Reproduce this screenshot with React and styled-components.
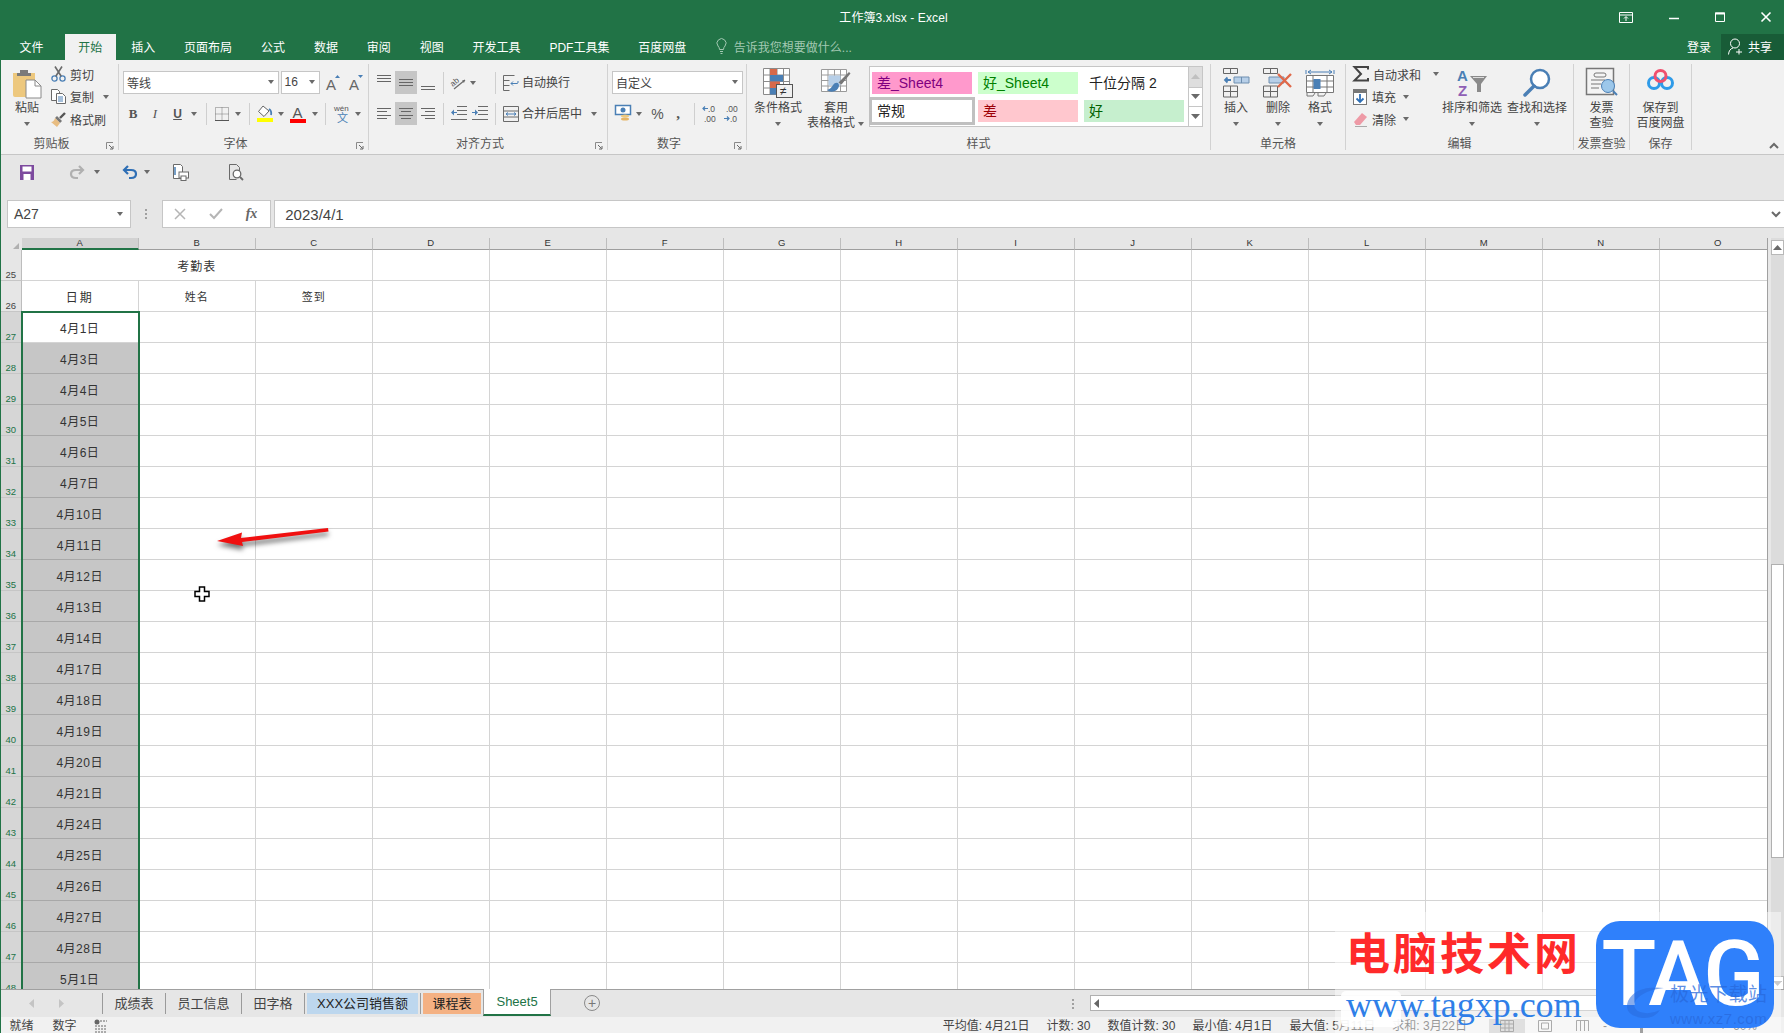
import React from "react";
import styled, { createGlobalStyle } from "styled-components";

const GRAY = "#6a6a6a";
const BLUE = "#4a7fb5";

const Global = createGlobalStyle`
  html, body { margin: 0; padding: 0; background: #fff; overflow: hidden; }
  * { box-sizing: border-box; }
  body { font-family: "Liberation Sans", "Noto Sans CJK SC", sans-serif; font-size: 12px; color: #444; }
  svg { display: block; flex-shrink: 0; overflow: visible; }
`;

const Page = styled.div`
  position: relative;
  width: 1784px;
  height: 1033px;
  display: flex;
  flex-direction: column;
  border-left: 1px solid #217346;
  overflow: hidden;
`;

/* title + tabs */
const TitleBar = styled.div`
  height: 34px;
  flex-shrink: 0;
  display: grid;
  grid-template-columns: 1fr auto 1fr;
  align-items: center;
  background: #217346;
  color: #fff;
`;
const Title = styled.div`
  font-size: 12px;
  padding: 0 0 2px 2px;
  letter-spacing: 0.1px;
`;
const WindowControls = styled.div`
  grid-column: 3;
  display: flex;
  justify-content: flex-end;
  align-items: center;
  gap: 36px;
  padding-right: 13px;
`;
const TabRow = styled.div`
  height: 26px;
  flex-shrink: 0;
  display: flex;
  align-items: stretch;
  gap: 2px;
  background: #217346;
  color: #fff;
`;
const RibbonTab = styled.div`
  display: flex;
  align-items: center;
  padding: 0 13.45px 2px;
  margin-left: ${(p) => p.$ml || 0}px;
  margin-right: ${(p) => p.$mr || 0}px;
  background: ${(p) => (p.$active ? "#f1f1f1" : "transparent")};
  color: ${(p) => (p.$active ? "#217346" : "#fff")};
`;
const TellMe = styled.div`
  display: flex;
  align-items: center;
  gap: 7px;
  margin-left: 14px;
  padding-bottom: 2px;
  color: #a3c9b3;
`;
const Login = styled.div`
  margin-left: auto;
  display: flex;
  align-items: center;
  padding: 0 10px 2px 0;
`;
const Share = styled.div`
  width: 63px;
  display: flex;
  align-items: center;
  gap: 5px;
  padding: 0 0 2px 7px;
  background: #185c37;
  margin-left: -2px;
`;

/* ribbon */
const Ribbon = styled.div`
  position: relative;
  height: 95px;
  flex-shrink: 0;
  display: flex;
  padding-top: 4px;
  background: #f1f1f1;
  border-bottom: 1px solid #c6c6c6;
`;
const Group = styled.div`
  position: relative;
  width: ${(p) => p.$w}px;
  height: 86px;
  flex-shrink: 0;
  display: flex;
  flex-direction: column;
  border-right: 1px solid #d2d2d2;
`;
const GroupBody = styled.div`
  height: 74px;
  flex-shrink: 0;
  display: flex;
  padding-left: ${(p) => p.$pl || 0}px;
  justify-content: ${(p) => (p.$center ? "center" : "flex-start")};
`;
const GroupLabel = styled.div`
  height: 12px;
  line-height: 12px;
  text-align: center;
  white-space: nowrap;
  color: #555;
  padding-right: ${(p) => (p.$launch ? 16 : 0)}px;
`;
const Launcher = styled.span`
  position: absolute;
  right: 4px;
  bottom: 0;
`;
const Collapse = styled.span`
  position: absolute;
  right: 5px;
  bottom: 5px;
`;
const BigBtn = styled.div`
  width: ${(p) => p.$w}px;
  margin-left: ${(p) => p.$ml || 0}px;
  flex-shrink: 0;
  display: flex;
  flex-direction: column;
  align-items: center;
  padding-top: 4px;
  white-space: nowrap;
`;
const BigIcon = styled.div`
  height: 33px;
  display: flex;
  align-items: flex-start;
`;
const BigLine = styled.div`
  height: 15px;
  line-height: 15px;
  display: flex;
  align-items: center;
`;
const SmallCol = styled.div`
  width: ${(p) => p.$w}px;
  margin-left: ${(p) => p.$ml || 0}px;
  margin-top: -1px;
  flex-shrink: 0;
`;
const SmallRow = styled.div`
  height: 22.5px;
  display: flex;
  align-items: center;
  gap: 4px;
  white-space: nowrap;
`;
const ToolRows = styled.div`
  display: flex;
  flex-direction: column;
  gap: 8px;
  padding-top: 7px;
`;
const ToolRow = styled.div`
  height: 23px;
  display: flex;
  align-items: center;
  white-space: nowrap;
`;
const Tool = styled.span`
  width: ${(p) => p.$w}px;
  height: 23px;
  margin-left: ${(p) => p.$ml || 0}px;
  flex-shrink: 0;
  display: inline-flex;
  align-items: center;
  justify-content: center;
  background: ${(p) => (p.$on ? "#c6c6c6" : "transparent")};
  font-family: ${(p) => (p.$serif ? '"Liberation Serif", serif' : "inherit")};
  font-size: ${(p) => p.$fs || 12}px;
  font-weight: ${(p) => (p.$bold ? 700 : 400)};
  font-style: ${(p) => (p.$italic ? "italic" : "normal")};
  text-decoration: ${(p) => (p.$under ? "underline" : "none")};
  color: #555;
`;
const ToolSep = styled.span`
  width: 1px;
  height: 22px;
  margin-left: ${(p) => p.$ml || 0}px;
  flex-shrink: 0;
  background: #cfcfcf;
`;
const ToolText = styled.span`
  margin-left: ${(p) => p.$ml || 0}px;
  padding-bottom: 2px;
`;
const Caret = styled.span`
  width: 8px;
  margin-left: ${(p) => p.$ml || 0}px;
  flex-shrink: 0;
  display: inline-flex;
  justify-content: center;
  &::after {
    content: "";
    border-left: 3.5px solid transparent;
    border-right: 3.5px solid transparent;
    border-top: 4px solid ${GRAY};
  }
`;
const Select = styled.div`
  width: ${(p) => p.$w}px;
  height: 23px;
  margin-left: ${(p) => p.$ml || 0}px;
  flex-shrink: 0;
  display: flex;
  align-items: center;
  justify-content: space-between;
  padding: 0 3px 1px;
  background: #fff;
  border: 1px solid #c6c6c6;
`;
const Gallery = styled.div`
  width: 320px;
  height: 61px;
  margin: 2px 0 0 2.5px;
  flex-shrink: 0;
  display: grid;
  grid-template-columns: repeat(3, 100px);
  grid-auto-rows: 22px;
  gap: 6px;
  padding: 5px 0 0 2.5px;
  background: #fff;
  border: 1px solid #c6c6c6;
`;
const StyleCell = styled.div`
  display: flex;
  align-items: center;
  padding: 0 0 2px 5px;
  font-size: 14px;
  background: ${(p) => p.$bg};
  color: ${(p) => p.$fg};
  box-shadow: ${(p) => (p.$picked ? "0 0 0 3px #c0c0c0" : "none")};
`;
const GalleryScroll = styled.div`
  width: 14px;
  height: 61px;
  margin-top: 2px;
  flex-shrink: 0;
  display: flex;
  flex-direction: column;
  border: 1px solid #c6c6c6;
  border-left: 0;
`;
const GalleryBtn = styled.div`
  flex: ${(p) => p.$flex};
  display: flex;
  align-items: center;
  justify-content: center;
  background: ${(p) => (p.$off ? "#dedede" : "#fff")};
  border-bottom: ${(p) => (p.$last ? 0 : "1px solid #c6c6c6")};
`;

/* quick access */
const Quick = styled.div`
  height: 44px;
  flex-shrink: 0;
  display: flex;
  align-items: center;
  padding-bottom: 10px;
  background: #e6e6e6;
`;
const QuickItem = styled.span`
  margin-left: ${(p) => p.$ml}px;
`;

/* formula bar */
const FormulaBar = styled.div`
  height: 39px;
  flex-shrink: 0;
  display: flex;
  align-items: flex-start;
  padding-top: 1px;
  background: #e6e6e6;
`;
const NameBox = styled.div`
  width: 124px;
  height: 28px;
  margin-left: 6px;
  display: flex;
  align-items: center;
  justify-content: space-between;
  padding: 0 6px;
  font-size: 14px;
  background: #fff;
  border: 1px solid #c6c6c6;
`;
const Dots = styled.span`
  width: 2px;
  height: 10px;
  margin: 9px 0 0 14px;
  background: repeating-linear-gradient(#a0a0a0 0 2px, transparent 2px 4px);
`;
const FuncBox = styled.div`
  width: 109px;
  height: 28px;
  margin-left: 14.7px;
  display: flex;
  align-items: center;
  gap: 23px;
  padding-left: 11px;
  background: #fff;
  border: 1px solid #c6c6c6;
`;
const FxLabel = styled.span`
  font: italic 700 14px "Liberation Serif", serif;
  color: #666;
`;
const FormulaInput = styled.div`
  flex: 1;
  height: 28px;
  margin-left: 3.6px;
  display: flex;
  align-items: center;
  justify-content: space-between;
  padding: 0 3px 0 10px;
  font-size: 15px;
  background: #fff;
  border: 1px solid #c6c6c6;
  border-right: 0;
`;

/* sheet */
const SheetArea = styled.div`
  flex: 1;
  min-height: 0;
  display: flex;
`;
const Sheet = styled.div`
  position: relative;
  flex: 1;
  min-width: 0;
  overflow: hidden;
  background: #fff;
`;
const HeadRow = styled.div`
  height: 12px;
  display: flex;
  background: #e6e6e6;
`;
const Corner = styled.div`
  width: 20.67px;
  flex-shrink: 0;
  display: flex;
  align-items: flex-end;
  justify-content: flex-end;
  padding: 0 3px 1px 0;
`;
const ColHead = styled.div`
  width: 117px;
  flex-shrink: 0;
  line-height: 10px;
  text-align: center;
  font-size: 9.5px;
  color: #333;
  background: ${(p) => (p.$active ? "#d2d2d2" : "transparent")};
  border-right: 1px solid #bdbdbd;
  border-bottom: ${(p) => (p.$active ? "2px solid #217346" : "1px solid #9e9e9e")};
`;
const Row = styled.div`
  height: 31px;
  display: flex;
`;
const RowHead = styled.div`
  width: 20.67px;
  flex-shrink: 0;
  display: flex;
  align-items: flex-end;
  justify-content: center;
  line-height: 11px;
  font-size: 9.5px;
  background: ${(p) => (p.$active ? "#d6d6d6" : "#e6e6e6")};
  color: ${(p) => (p.$active ? "#217346" : "#444")};
  border-bottom: 1px solid #c6c6c6;
  border-right: 1px solid #bdbdbd;
`;
const Cell = styled.div`
  width: ${(p) => p.$w || 117}px;
  flex-shrink: 0;
  display: flex;
  align-items: center;
  justify-content: center;
  color: #333;
  font-size: ${(p) => p.$fs || 12}px;
  letter-spacing: ${(p) => p.$ls || 0}px;
  background: ${(p) => (p.$sel ? "#c6c6c6" : "#fff")};
  border-right: 1px solid ${(p) => (p.$sel ? "#a8a8a8" : "#d4d4d4")};
  border-bottom: 1px solid ${(p) => (p.$sel ? "#a8a8a8" : "#d4d4d4")};
`;
const Selection = styled.div`
  position: absolute;
  left: 19.7px;
  top: 73px;
  bottom: -4px;
  width: 119.6px;
  border: 2px solid #217346;
  pointer-events: none;
`;
const VScroll = styled.div`
  width: 17px;
  flex-shrink: 0;
  display: flex;
  flex-direction: column;
  padding-left: 3px;
  background: #e8e8e8;
  border-left: 1px solid #a0a0a0;
`;
const VTrack = styled.div`
  flex: 1;
  display: flex;
  flex-direction: column;
  background: #dcdcdc;
`;
const VBtn = styled.div`
  height: 15px;
  display: flex;
  align-items: center;
  justify-content: center;
  background: #fff;
  border: 1px solid #b8b8b8;
  margin-top: ${(p) => p.$mt || 0}px;
`;
const VSpace = styled.div`
  height: ${(p) => p.$h}px;
`;
const VThumb = styled.div`
  height: 294px;
  background: #fff;
  border: 1px solid #b0b0b0;
`;

/* sheet tabs */
const TabBar = styled.div`
  height: 28px;
  flex-shrink: 0;
  display: flex;
  background: #e6e6e6;
  border-top: 1px solid #a0a0a0;
`;
const TabNav = styled.div`
  width: 101px;
  flex-shrink: 0;
  display: flex;
  align-items: center;
  gap: 25px;
  padding-left: 28px;
`;
const SheetTab = styled.div`
  display: flex;
  align-items: center;
  padding: 0 ${(p) => p.$pad}px 2px;
  margin: 3px 0 3px ${(p) => p.$ml || 0}px;
  font-size: 13px;
  white-space: nowrap;
  border-left: ${(p) => (p.$sep ? "1px solid #9a9a9a" : "0")};
  color: #444;
`;
const ColorTab = styled(SheetTab)`
  background: ${(p) => p.$bg};
  color: #222;
`;
const ActiveTab = styled.div`
  width: 68px;
  margin: -1px 0 1px 2px;
  display: flex;
  align-items: center;
  justify-content: center;
  background: #fff;
  color: #217346;
  font-size: 13px;
  border-left: 1px solid #a0a0a0;
  border-right: 1px solid #a0a0a0;
  border-bottom: 2px solid #217346;
`;
const AddSheet = styled.span`
  width: 16px;
  height: 16px;
  margin: 5px 0 0 33px;
  flex-shrink: 0;
  display: flex;
  align-items: center;
  justify-content: center;
  border: 1px solid #8a8a8a;
  border-radius: 50%;
  font-size: 14px;
  line-height: 1;
  color: #777;
`;
const HBarDots = styled(Dots)`
  margin: 9px 0 0 472px;
`;
const HBar = styled.div`
  width: 676px;
  height: 16px;
  margin: 5px 0 0 16px;
  display: flex;
  align-items: center;
  padding-left: 3px;
  background: #fff;
  border: 1px solid #b0b0b0;
`;

/* status */
const Status = styled.div`
  height: 16px;
  flex-shrink: 0;
  display: flex;
  align-items: center;
  background: #f1f1f1;
  white-space: nowrap;
  line-height: 14px;
  padding-top: 2px;
`;
const StatusItem = styled.span`
  margin-left: ${(p) => p.$ml}px;
`;
const Stats = styled.div`
  margin-left: auto;
  display: flex;
  gap: 17px;
`;
const StatusRight = styled.div`
  width: 295px;
  margin-left: 22px;
  flex-shrink: 0;
  display: flex;
  align-items: center;
`;
const ViewBtn = styled.span`
  width: ${(p) => p.$w}px;
  height: 14px;
  flex-shrink: 0;
  display: flex;
  align-items: center;
  justify-content: center;
  background: ${(p) => (p.$on ? "#c6c6c6" : "transparent")};
`;
const ZoomTrack = styled.span`
  position: relative;
  width: 96px;
  height: 1px;
  margin: 0 6px;
  flex-shrink: 0;
  background: #9a9a9a;
`;
const ZoomThumb = styled.span`
  position: absolute;
  left: 24px;
  top: -7px;
  width: 3px;
  height: 14px;
  background: #555;
`;

/* things lying over the sheet */
const Arrow = styled.svg`
  position: absolute;
  left: 211px;
  top: 522px;
  filter: drop-shadow(0 4px 2.5px rgba(0, 0, 0, 0.55));
`;
const CrossCursor = styled.svg`
  position: absolute;
  left: 193px;
  top: 586px;
`;
const Watermark = styled.div`
  position: absolute;
  left: 1334px;
  top: 912px;
  width: 446px;
  height: 121px;
  display: flex;
  background: rgba(255, 255, 255, 0.45);
`;
const WmText = styled.div`
  position: relative;
  width: 261px;
  flex-shrink: 0;
  padding: 17px 0 0 11px;
`;
const WmRed = styled.div`
  font: 700 44px/44px "Noto Sans CJK SC", sans-serif;
  letter-spacing: 3px;
  color: #ff2a2a;
  white-space: nowrap;
`;
const WmUrl = styled.div`
  position: relative;
  margin: 14px 0 0 0;
  font: 36px/36px "Liberation Serif", serif;
  color: #2f7fe8;
  white-space: nowrap;
`;
const WmBlur = styled.div`
  position: absolute;
  left: 6px;
  top: 79px;
  width: 60px;
  height: 36px;
  border-radius: 5px;
  background: rgba(255, 255, 255, 0.9);
`;
const WmTile = styled.div`
  position: relative;
  width: 178px;
  height: 107px;
  margin-top: 9px;
  flex-shrink: 0;
  display: flex;
  align-items: center;
  justify-content: center;
  padding-right: 8px;
  border-radius: 24px;
  background: #2f80fb;
  color: #fff;
  font: 500 90px/90px Roboto, sans-serif;
  letter-spacing: -4px;
  overflow: hidden;
`;
const WmFaint = styled.div`
  position: absolute;
  left: 74px;
  top: ${(p) => p.$top}px;
  font-family: "Liberation Sans", "Noto Sans CJK SC", sans-serif;
  font-size: ${(p) => p.$fs}px;
  line-height: 1;
  font-weight: 400;
  letter-spacing: 0.5px;
  color: rgba(40, 105, 220, 0.75);
  white-space: nowrap;
`;
const WmSwirl = styled.svg`
  position: absolute;
  left: 28px;
  top: 64px;
`;

/* icons */
const Paste = () => (
  <svg width="28" height="30" viewBox="0 0 28 30">
    <path d="M0 5h22v24H2q-2 0-2-2z" fill="#edc87e" />
    <path d="M4 5h3V2h8v3h3v3H4z" fill="#7a7a7a" />
    <path d="M13 12h9l6 6v12H13z" fill="#fff" stroke="#8a8a8a" />
    <path d="M22 12v6h6" fill="none" stroke="#8a8a8a" />
  </svg>
);
const Scissors = () => (
  <svg width="15" height="16" viewBox="0 0 15 16">
    <circle cx="3.5" cy="12.5" r="2.6" fill="none" stroke={BLUE} strokeWidth="1.3" />
    <circle cx="11.5" cy="12.5" r="2.6" fill="none" stroke={BLUE} strokeWidth="1.3" />
    <path d="M4.8 10.2 11 .5M10.2 10.2 4 .5" stroke={GRAY} strokeWidth="1.6" />
  </svg>
);
const Copy = () => (
  <svg width="15" height="15" viewBox="0 0 15 15">
    <path d="M.5.5h6l2 2v9H.5z" fill="#fff" stroke={GRAY} />
    <path d="M5.5 4.5h6l3 3v7h-9z" fill="#fff" stroke={GRAY} />
    <path d="M7 8h5M7 10h5M7 12h5" stroke={BLUE} />
  </svg>
);
const Brush = () => (
  <svg width="15" height="15" viewBox="0 0 15 15">
    <path d="M9 6 14 1" stroke="#555" strokeWidth="2.4" />
    <path d="m6 4 5 5-2 2-5-5z" fill="#777" />
    <path d="M4 6l5 5-3 4-6-5q3 0 4-4z" fill="#e8bd82" />
  </svg>
);
const Launch = () => (
  <svg width="8" height="8" viewBox="0 0 8 8">
    <path d="M.5 7V.5H7" fill="none" stroke="#8a8a8a" />
    <path d="m3 3 3.5 3.5M7 4v3H4" fill="none" stroke="#666" />
  </svg>
);
const GrowA = ({ up }) => (
  <svg width="14" height="17" viewBox="0 0 14 17">
    <text x="0" y="16" fontSize="15" fontFamily="Liberation Sans" fill="#666">A</text>
    <path d={up ? "M9 4l2.5-3L14 4z" : "M9 1h5l-2.5 3z"} fill={BLUE} />
  </svg>
);
const BorderIcon = () => (
  <svg width="14" height="14" viewBox="0 0 14 14">
    <path d="M.5.5h13v13H.5zM.5 7h13M7 .5v13" fill="none" stroke="#777" strokeDasharray="1 1" />
    <path d="M0 13.5h14" stroke="#555" />
  </svg>
);
const FillIcon = () => (
  <svg width="16" height="17" viewBox="0 0 16 17">
    <path d="M6 1 1.5 6.5 7 11.5l5-5.5z" fill="#fff" stroke="#666" />
    <path d="M12 4q3 2 2 6" fill="none" stroke={BLUE} strokeWidth="1.8" />
    <rect y="13" width="16" height="4" fill="#ffff00" />
  </svg>
);
const FontColor = () => (
  <svg width="16" height="18" viewBox="0 0 16 18">
    <text x="2.5" y="13" fontSize="15" fontFamily="Liberation Sans" fill="#555">A</text>
    <rect y="14" width="16" height="4" fill="#ff0000" />
  </svg>
);
const Wen = () => (
  <svg width="16" height="20" viewBox="0 0 16 20">
    <text x="0" y="7" fontSize="8" fontFamily="Liberation Sans" fill="#555">wén</text>
    <text x="3" y="18" fontSize="11" fontFamily="Noto Sans CJK SC" fill={BLUE}>文</text>
  </svg>
);
const Lines = ({ w = 14, rows }) => (
  <svg width={w} height="23" viewBox={`0 0 ${w} 23`}>
    {rows.map(([a, b, y]) => (
      <path key={y} d={`M${a} ${y}.5H${b}`} stroke="#666" />
    ))}
  </svg>
);
const Orient = () => (
  <svg width="16" height="16" viewBox="0 0 16 16">
    <text x="0" y="9" fontSize="8" fontFamily="Liberation Sans" fill="#555" transform="rotate(-40 5 8)">ab</text>
    <path d="M3 14 14 5" stroke={GRAY} strokeWidth="1.2" />
    <path d="m14 5-3 .5 2 2.5z" fill={GRAY} />
  </svg>
);
const Wrap = () => (
  <svg width="16" height="16" viewBox="0 0 16 16">
    <path d="M.5.5h11M.5 5.5h6M.5 10.500h6M.5 15.500h6M.5.5v15" fill="none" stroke={GRAY} />
    <path d="M8 8.500h6q1.500 0 1-2.500M8 8.500l2-2M8 8.500l2 2" fill="none" stroke={BLUE} />
  </svg>
);
const Merge = () => (
  <svg width="16" height="16" viewBox="0 0 16 16">
    <path d="M.5.500h15v15H.5zM.5 5h15M.5 11h15" fill="none" stroke={GRAY} />
    <path d="M3 8h10M3 8l2-1.500M3 8l2 1.500M13 8l-2-1.500M13 8l-2 1.500" fill="none" stroke={BLUE} />
  </svg>
);
const Indent = ({ flip }) => (
  <svg width="16" height="15" viewBox="0 0 16 15">
    <path d="M6 .5h10M6 4.500h10M6 8.500h10M0 13.500h16" fill="none" stroke={GRAY} />
    <path d={flip ? "M0 6h3V3.500l3 3-3 3V7H0z" : "M6 6H3V3.500l-3 3 3 3V7h3z"} fill={BLUE} />
  </svg>
);
const Currency = () => (
  <svg width="16" height="17" viewBox="0 0 16 17">
    <rect x=".5" y=".5" width="15" height="9" fill="#fff" stroke={BLUE} strokeWidth="1.500" />
    <circle cx="8" cy="5" r="2.500" fill={BLUE} />
    <ellipse cx="10" cy="11" rx="4" ry="1.500" fill="#edc87e" />
    <ellipse cx="10" cy="14" rx="4" ry="1.500" fill="#e6b566" />
  </svg>
);
const Decimal = ({ more }) => (
  <svg width="15" height="18" viewBox="0 0 15 18">
    <text x={more ? 2 : 6} y="7" fontSize="8.500" fontFamily="Liberation Sans" fill="#555">{more ? ".00" : ".0"}</text>
    <text x={more ? 6 : 2} y="17" fontSize="8.500" fontFamily="Liberation Sans" fill="#555">{more ? ".0" : ".00"}</text>
    <path d={more ? "M0 13.500h5M3 11.500l2 2-2 2" : "M6 3.500H1M3 1.500l-2 2 2 2"} fill="none" stroke={BLUE} strokeWidth="1.200" />
  </svg>
);
const CondFormat = () => (
  <svg width="30" height="30" viewBox="0 0 30 30">
    <path d="M.5.500h26v26H.5zM.5 7h26M.5 13.500h26M.5 20h26M7 .5v26M14 .5v26M20.500.5v26" fill="#fff" stroke="#8a8a8a" />
    <rect x="7" y="1" width="7" height="6" fill="#d8694a" />
    <rect x="7" y="7" width="13" height="6.500" fill={BLUE} />
    <rect x="7" y="13.500" width="10" height="6.500" fill="#d8694a" />
    <rect x="7" y="20" width="6" height="6.500" fill={BLUE} />
    <rect x="13.500" y="16.500" width="16" height="13" fill="#f1f1f1" stroke="#555" />
    <text x="17" y="27" fontSize="12" fontFamily="Liberation Sans" fill="#333">≠</text>
  </svg>
);
const TableFormat = () => (
  <svg width="30" height="30" viewBox="0 0 30 30">
    <path d="M.5 1.500h25v22H.5zM.5 7h25M.5 12.500h25M.5 18h25M7 1.500v22M13.500 1.500v22M19.500 1.500v22" fill="#fff" stroke="#9a9a9a" />
    <rect x="7.500" y="7.500" width="12" height="10" fill="#b7cfe8" />
    <path d="m28 4 1.500 1.500-9 11-3-2z" fill="#777" />
    <path d="M17 15q-3-1-5 2-2 4-6 5 3 3 8 1 4-2 4-6z" fill={BLUE} />
  </svg>
);
const InsertCells = () => (
  <svg width="26" height="30" viewBox="0 0 26 30">
    <path d="M.5.500h14v5H.5zM7.500.5v5M.5 18h14v11H.5zM.5 23.500h14M7.500 18v11" fill="none" stroke="#666" />
    <path d="M11 9h15v6H11zM18.500 9v6" fill="#b7cfe8" stroke="#6e8fb0" />
    <path d="M8 12H2M4.500 9.500 2 12l2.500 2.500" fill="none" stroke={BLUE} strokeWidth="1.800" />
  </svg>
);
const DeleteCells = () => (
  <svg width="30" height="30" viewBox="0 0 30 30">
    <path d="M.5.500h14v5H.5zM7.500.5v5M.5 18h14v11H.5zM.5 23.500h14M7.500 18v11" fill="none" stroke="#666" />
    <path d="M6 9h15v6H6z" fill="#b7cfe8" stroke="#6e8fb0" />
    <path d="m15 6 13 13M28 6 15 19" stroke="#e0694a" strokeWidth="2.400" />
  </svg>
);
const FormatCells = () => (
  <svg width="28" height="30" viewBox="0 0 28 30">
    <path d="M0 2v4M28 2v4M2 4h24M2 4l3-2M2 4l3 2M26 4l-3-2M26 4l-3 2" fill="none" stroke={BLUE} />
    <path d="M.5 7.500h27v17H.5zM.5 13h27M.5 19h27M7 7.500v17M21 7.500v17" fill="#fff" stroke="#777" />
    <rect x="7.500" y="11" width="7" height="10" fill={BLUE} />
    <path d="M1 25v3h6l2-3M12 25v3h6l2-3" fill="none" stroke="#777" />
  </svg>
);
const Sigma = () => (
  <svg width="16" height="16" viewBox="0 0 16 16">
    <path d="M15 3.500V1H1.500l6.500 7-6.500 6.500H15V12" fill="none" stroke="#444" strokeWidth="2" />
  </svg>
);
const FillDown = () => (
  <svg width="15" height="16" viewBox="0 0 15 16">
    <rect x=".5" y=".5" width="13" height="15" fill="#fff" stroke="#777" />
    <rect x="1" y="1" width="12" height="3" fill="#777" />
    <path d="M7 5v8M3.500 9.500 7 13l3.500-3.500" fill="none" stroke="#2f6fb5" strokeWidth="1.800" />
  </svg>
);
const Eraser = () => (
  <svg width="15" height="15" viewBox="0 0 15 15">
    <path d="m9 1 5 4-7 8H3L1 10z" fill="#ee9aa6" />
    <path d="M2 14.500h12" stroke="#aaa" />
  </svg>
);
const SortFilter = () => (
  <svg width="30" height="30" viewBox="0 0 30 30">
    <text x="0" y="13" fontSize="15" fontWeight="700" fontFamily="Liberation Sans" fill={BLUE}>A</text>
    <text x="1" y="28" fontSize="15" fontWeight="700" fontFamily="Liberation Sans" fill="#8f5fb5">Z</text>
    <path d="M13 8h17l-6 8v8h-4v-8z" fill="#8a8a8a" />
    <path d="M16 9.500h11" stroke="#ddd" />
  </svg>
);
const FindIcon = () => (
  <svg width="28" height="30" viewBox="0 0 28 30">
    <circle cx="17" cy="11" r="9" fill="#fff" stroke={BLUE} strokeWidth="2.500" />
    <path d="M11 18 2 27" stroke={BLUE} strokeWidth="3.500" strokeLinecap="round" />
  </svg>
);
const InvoiceIcon = () => (
  <svg width="32" height="30" viewBox="0 0 32 30">
    <rect x=".5" y=".5" width="27" height="26" fill="#f4f4f4" stroke="#777" strokeWidth="1.500" />
    <rect x="8" y="5" width="12" height="4" rx="2" fill="none" stroke="#777" />
    <path d="M5 12h14M5 16h10M5 20h8" stroke="#777" />
    <circle cx="22" cy="18" r="6.500" fill="#9cc7ea" stroke={BLUE} />
    <path d="m27 23 4 4" stroke={BLUE} strokeWidth="2" />
  </svg>
);
const BaiduCloud = () => (
  <svg width="27" height="24" viewBox="0 0 27 24">
    <circle cx="7" cy="15" r="5.500" fill="none" stroke="#2f9be8" strokeWidth="3" />
    <circle cx="20" cy="15" r="5.500" fill="none" stroke="#2f9be8" strokeWidth="3" />
    <circle cx="13.500" cy="8" r="5.500" fill="none" stroke="#f0506e" strokeWidth="3" />
  </svg>
);
const FloppySave = () => (
  <svg width="14" height="15" viewBox="0 0 14 15">
    <path d="M0 0h14v15H0z" fill="#7d4a9e" />
    <rect x="2.500" y="1.500" width="9" height="5" fill="#fff" />
    <rect x="3.500" y="9" width="7" height="6" fill="#fff" />
  </svg>
);
const Turn = ({ back }) => (
  <svg width="15" height="14" viewBox="0 0 15 14">
    <g transform={back ? "" : "matrix(-1 0 0 1 15 0)"} fill="none" stroke={back ? "#2f6fb5" : "#b0b0b0"} strokeWidth="2.200">
      <path d="M2 5h7q5 0 5 4t-5 4H7" />
      <path d="M6 1 2 5l4 4" />
    </g>
  </svg>
);
const PrintPreview = () => (
  <svg width="16" height="17" viewBox="0 0 16 17">
    <path d="M.5.500h7l2 2v12H.5z" fill="#fff" stroke={GRAY} />
    <path d="M2 3v8" stroke={BLUE} strokeWidth="1.500" />
    <rect x="6" y="8" width="9.500" height="6" fill="#fff" stroke={GRAY} />
    <rect x="8" y="12" width="5" height="4.500" fill="#fff" stroke={GRAY} />
  </svg>
);
const DocSearch = () => (
  <svg width="15" height="17" viewBox="0 0 15 17">
    <path d="M.5.500h7l3 3V7M.5.500v15h7" fill="none" stroke={GRAY} />
    <circle cx="8" cy="10" r="3.800" fill="#fff" stroke={GRAY} strokeWidth="1.300" />
    <path d="m11 13 3 3" stroke={GRAY} strokeWidth="1.800" />
  </svg>
);
const Bulb = () => (
  <svg width="11" height="15" viewBox="0 0 11 15">
    <path d="M3.500 10.500Q3.500 8.500 2 7a4.500 4.500 0 1 1 7 0q-1.500 1.500-1.500 3.500zM4 12.500h3M4.500 14.500h2" fill="none" stroke="#a3c9b3" />
  </svg>
);
const PersonPlus = () => (
  <svg width="15" height="17" viewBox="0 0 15 17">
    <circle cx="7" cy="5.500" r="4.500" fill="none" stroke="#fff" />
    <path d="M.5 16.500Q1 11 5 10M11 11v5.500M8 14h6" fill="none" stroke="#fff" />
  </svg>
);
const ArrowUp = ({ c = GRAY }) => (
  <svg width="9" height="5" viewBox="0 0 9 5">
    <path d="M0 5 4.500 0 9 5z" fill={c} />
  </svg>
);
const ArrowDown = ({ c = GRAY }) => (
  <svg width="9" height="5" viewBox="0 0 9 5">
    <path d="M0 0h9L4.500 5z" fill={c} />
  </svg>
);
const Chevron = ({ up }) => (
  <svg width="10" height="7" viewBox="0 0 10 7">
    <path d={up ? "M1 6l4-4 4 4" : "M1 1l4 4 4-4"} fill="none" stroke={GRAY} strokeWidth="2" />
  </svg>
);

const MONTH_DAYS = [
  "4月1日", "4月3日", "4月4日", "4月5日", "4月6日", "4月7日", "4月10日", "4月11日",
  "4月12日", "4月13日", "4月14日", "4月17日", "4月18日", "4月19日", "4月20日", "4月21日",
  "4月24日", "4月25日", "4月26日", "4月27日", "4月28日", "5月1日",
];
const COLS = "ABCDEFGHIJKLMNO".split("");
const LEFT_ROWS = [[0, 14, 6], [0, 10, 9], [0, 14, 13], [0, 10, 16]];
const CENTER_ROWS = [[4, 18, 6], [6, 16, 9], [4, 18, 13], [6, 16, 16]];
const RIGHT_ROWS = [[0, 14, 6], [4, 14, 9], [0, 14, 13], [4, 14, 16]];
const TAIL_COLS = COLS.slice(3);

const Big = ({ w, ml, icon, lines, caret, inlineCaret }) => (
  <BigBtn $w={w} $ml={ml}>
    <BigIcon>{icon}</BigIcon>
    {lines.map((t, i) => (
      <BigLine key={t}>
        {t}
        {inlineCaret && i === lines.length - 1 && <Caret $ml={2} />}
      </BigLine>
    ))}
    {caret && (
      <BigLine>
        <Caret />
      </BigLine>
    )}
  </BigBtn>
);

function ClipboardGroup() {
  return (
    <Group $w={118}>
      <GroupBody $pl={10}>
        <Big w={32} icon={<Paste />} lines={["粘贴"]} caret />
        <SmallCol $w={60} $ml={8}>
          <SmallRow><Scissors />剪切</SmallRow>
          <SmallRow><Copy />复制<Caret $ml={4} /></SmallRow>
          <SmallRow><Brush />格式刷</SmallRow>
        </SmallCol>
      </GroupBody>
      <GroupLabel $launch>剪贴板</GroupLabel>
      <Launcher><Launch /></Launcher>
    </Group>
  );
}

function FontGroup() {
  return (
    <Group $w={250}>
      <GroupBody $pl={4}>
        <ToolRows>
          <ToolRow>
            <Select $w={156}>等线<Caret /></Select>
            <Select $w={39} $ml={1.5}>16<Caret /></Select>
            <Tool $w={14} $ml={6}><GrowA up /></Tool>
            <Tool $w={14} $ml={9}><GrowA /></Tool>
          </ToolRow>
          <ToolRow>
            <Tool $w={14} $ml={3} $serif $bold $fs={13}>B</Tool>
            <Tool $w={14} $ml={8} $serif $italic $fs={13}>I</Tool>
            <Tool $w={14} $ml={8.5} $under $bold $fs={12}>U</Tool>
            <Caret $ml={5.5} />
            <ToolSep $ml={7.5} />
            <Tool $w={14} $ml={8}><BorderIcon /></Tool>
            <Caret $ml={5} />
            <ToolSep $ml={7} />
            <Tool $w={16} $ml={7}><FillIcon /></Tool>
            <Caret $ml={4} />
            <Tool $w={16} $ml={5}><FontColor /></Tool>
            <Caret $ml={5} />
            <ToolSep $ml={6} />
            <Tool $w={16} $ml={8}><Wen /></Tool>
            <Caret $ml={4} />
          </ToolRow>
        </ToolRows>
      </GroupBody>
      <GroupLabel $launch>字体</GroupLabel>
      <Launcher><Launch /></Launcher>
    </Group>
  );
}

function AlignGroup() {
  return (
    <Group $w={239}>
      <GroupBody $pl={8}>
        <ToolRows>
          <ToolRow>
            <Tool $w={14}><Lines rows={[[0, 14, 4], [0, 14, 7], [0, 14, 10]]} /></Tool>
            <Tool $w={22} $ml={4} $on><Lines w={22} rows={[[4, 18, 8], [4, 18, 11], [4, 18, 14]]} /></Tool>
            <Tool $w={14} $ml={4}><Lines rows={[[0, 14, 15], [0, 14, 18]]} /></Tool>
            <ToolSep $ml={8} />
            <Tool $w={16} $ml={7}><Orient /></Tool>
            <Caret $ml={2} />
            <ToolSep $ml={18} />
            <Tool $w={16} $ml={7}><Wrap /></Tool>
            <ToolText $ml={3}>自动换行</ToolText>
          </ToolRow>
          <ToolRow>
            <Tool $w={14}><Lines rows={LEFT_ROWS} /></Tool>
            <Tool $w={22} $ml={4} $on><Lines w={22} rows={CENTER_ROWS} /></Tool>
            <Tool $w={14} $ml={4}><Lines rows={RIGHT_ROWS} /></Tool>
            <ToolSep $ml={8} />
            <Tool $w={16} $ml={7}><Indent /></Tool>
            <Tool $w={16} $ml={5}><Indent flip /></Tool>
            <ToolSep $ml={7} />
            <Tool $w={16} $ml={7}><Merge /></Tool>
            <ToolText $ml={3}>合并后居中</ToolText>
            <Caret $ml={8} />
          </ToolRow>
        </ToolRows>
      </GroupBody>
      <GroupLabel $launch>对齐方式</GroupLabel>
      <Launcher><Launch /></Launcher>
    </Group>
  );
}

function NumberGroup() {
  return (
    <Group $w={139}>
      <GroupBody $pl={4}>
        <ToolRows>
          <ToolRow>
            <Select $w={131}>自定义<Caret /></Select>
          </ToolRow>
          <ToolRow>
            <Tool $w={16} $ml={3}><Currency /></Tool>
            <Caret $ml={4} />
            <Tool $w={13} $ml={8} $fs={14}>%</Tool>
            <Tool $w={8} $ml={10} $serif $bold $fs={15}>,</Tool>
            <ToolSep $ml={12} />
            <Tool $w={15} $ml={7}><Decimal /></Tool>
            <Tool $w={15} $ml={7}><Decimal more /></Tool>
          </ToolRow>
        </ToolRows>
      </GroupBody>
      <GroupLabel $launch>数字</GroupLabel>
      <Launcher><Launch /></Launcher>
    </Group>
  );
}

function StylesGroup() {
  return (
    <Group $w={464}>
      <GroupBody>
        <Big w={50} ml={6} icon={<CondFormat />} lines={["条件格式"]} caret />
        <Big w={60} ml={3} icon={<TableFormat />} lines={["套用", "表格格式"]} inlineCaret />
        <Gallery>
          <StyleCell $bg="#ff99cc" $fg="#800080">差_Sheet4</StyleCell>
          <StyleCell $bg="#ccffcc" $fg="#008000">好_Sheet4</StyleCell>
          <StyleCell $bg="#fff" $fg="#222">千位分隔 2</StyleCell>
          <StyleCell $bg="#fff" $fg="#222" $picked>常规</StyleCell>
          <StyleCell $bg="#ffc7ce" $fg="#9c0006">差</StyleCell>
          <StyleCell $bg="#c6efce" $fg="#006100">好</StyleCell>
        </Gallery>
        <GalleryScroll>
          <GalleryBtn $flex={21} $off><ArrowUp c="#c0c0c0" /></GalleryBtn>
          <GalleryBtn $flex={19}><ArrowDown /></GalleryBtn>
          <GalleryBtn $flex={20} $last><ArrowDown /></GalleryBtn>
        </GalleryScroll>
      </GroupBody>
      <GroupLabel>样式</GroupLabel>
    </Group>
  );
}

function CellsGroup() {
  return (
    <Group $w={135}>
      <GroupBody $pl={4}>
        <Big w={42} icon={<InsertCells />} lines={["插入"]} caret />
        <Big w={42} icon={<DeleteCells />} lines={["删除"]} caret />
        <Big w={42} icon={<FormatCells />} lines={["格式"]} caret />
      </GroupBody>
      <GroupLabel>单元格</GroupLabel>
    </Group>
  );
}

function EditGroup() {
  return (
    <Group $w={228}>
      <GroupBody $pl={7}>
        <SmallCol $w={89}>
          <SmallRow><Sigma />自动求和<Caret $ml={7} /></SmallRow>
          <SmallRow><FillDown />填充<Caret $ml={2} /></SmallRow>
          <SmallRow><Eraser />清除<Caret $ml={2} /></SmallRow>
        </SmallCol>
        <Big w={60} icon={<SortFilter />} lines={["排序和筛选"]} caret />
        <Big w={60} ml={5} icon={<FindIcon />} lines={["查找和选择"]} caret />
      </GroupBody>
      <GroupLabel>编辑</GroupLabel>
    </Group>
  );
}

function RibbonBar() {
  return (
    <Ribbon>
      <ClipboardGroup />
      <FontGroup />
      <AlignGroup />
      <NumberGroup />
      <StylesGroup />
      <CellsGroup />
      <EditGroup />
      <Group $w={56}>
        <GroupBody $center>
          <Big w={50} icon={<InvoiceIcon />} lines={["发票", "查验"]} />
        </GroupBody>
        <GroupLabel>发票查验</GroupLabel>
      </Group>
      <Group $w={62}>
        <GroupBody $center>
          <Big w={50} icon={<BaiduCloud />} lines={["保存到", "百度网盘"]} />
        </GroupBody>
        <GroupLabel>保存</GroupLabel>
      </Group>
      <Collapse><Chevron up /></Collapse>
    </Ribbon>
  );
}

function SheetGrid() {
  return (
    <Sheet>
      <HeadRow>
        <Corner>
          <svg width="6" height="6" viewBox="0 0 6 6"><path d="M6 0v6H0z" fill="#b0b0b0" /></svg>
        </Corner>
        {COLS.map((c) => (
          <ColHead key={c} $active={c === "A"}>{c}</ColHead>
        ))}
      </HeadRow>
      <Row>
        <RowHead>25</RowHead>
        <Cell $w={351} $ls={1}>考勤表</Cell>
        {TAIL_COLS.map((c) => <Cell key={c} />)}
      </Row>
      <Row>
        <RowHead>26</RowHead>
        <Cell $ls={2}>日期</Cell>
        <Cell $fs={11} $ls={1}>姓名</Cell>
        <Cell $fs={11} $ls={1}>签到</Cell>
        {TAIL_COLS.map((c) => <Cell key={c} />)}
      </Row>
      {MONTH_DAYS.map((d, i) => (
        <Row key={d}>
          <RowHead $active>{27 + i}</RowHead>
          <Cell $sel={i > 0} $ls={0.5}>{d}</Cell>
          {COLS.slice(1).map((c) => <Cell key={c} />)}
        </Row>
      ))}
      <Selection />
    </Sheet>
  );
}

export default function App() {
  return (
    <>
      <Global />
      <Page>
        <TitleBar>
          <span />
          <Title>工作簿3.xlsx - Excel</Title>
          <WindowControls>
            <svg width="14" height="11" viewBox="0 0 14 11">
              <path d="M.5.500h13v10H.5zM.5 3h13M7 9V5M5 6.500l2-2 2 2" fill="none" stroke="#fff" />
            </svg>
            <svg width="10" height="10" viewBox="0 0 10 10"><path d="M0 6.500h10" stroke="#fff" strokeWidth="1.500" /></svg>
            <svg width="10" height="10" viewBox="0 0 10 10"><path d="M.5 1h9v8.500h-9z" fill="none" stroke="#fff" strokeWidth="1" /><path d="M0 1.500h10" stroke="#fff" strokeWidth="2" /></svg>
            <svg width="10" height="10" viewBox="0 0 10 10"><path d="m.5.500 9 9M9.500.500l-9 9" stroke="#fff" strokeWidth="1.600" /></svg>
          </WindowControls>
        </TitleBar>
        <TabRow>
          <RibbonTab $ml={5} $mr={6}>文件</RibbonTab>
          <RibbonTab $active>开始</RibbonTab>
          <RibbonTab>插入</RibbonTab>
          <RibbonTab>页面布局</RibbonTab>
          <RibbonTab>公式</RibbonTab>
          <RibbonTab>数据</RibbonTab>
          <RibbonTab>审阅</RibbonTab>
          <RibbonTab>视图</RibbonTab>
          <RibbonTab>开发工具</RibbonTab>
          <RibbonTab>PDF工具集</RibbonTab>
          <RibbonTab>百度网盘</RibbonTab>
          <TellMe><Bulb />告诉我您想要做什么...</TellMe>
          <Login>登录</Login>
          <Share><PersonPlus />共享</Share>
        </TabRow>
        <RibbonBar />
        <Quick>
          <QuickItem $ml={19}><FloppySave /></QuickItem>
          <QuickItem $ml={36}><Turn /></QuickItem>
          <Caret $ml={8} />
          <QuickItem $ml={21}><Turn back /></QuickItem>
          <Caret $ml={6} />
          <QuickItem $ml={22}><PrintPreview /></QuickItem>
          <QuickItem $ml={40}><DocSearch /></QuickItem>
        </Quick>
        <FormulaBar>
          <NameBox>A27<Caret /></NameBox>
          <Dots />
          <FuncBox>
            <svg width="12" height="12" viewBox="0 0 12 12"><path d="m1 1 10 10M11 1 1 11" stroke="#b5b5b5" strokeWidth="1.500" /></svg>
            <svg width="14" height="12" viewBox="0 0 14 12"><path d="m1 6 4 4 8-9" fill="none" stroke="#b5b5b5" strokeWidth="2" /></svg>
            <FxLabel>fx</FxLabel>
          </FuncBox>
          <FormulaInput>2023/4/1<Chevron /></FormulaInput>
        </FormulaBar>
        <SheetArea>
          <SheetGrid />
          <VScroll>
            <VTrack>
              <VBtn $mt={2}><ArrowUp /></VBtn>
              <VSpace $h={309} />
              <VThumb />
              <VSpace $h={118} />
              <VBtn><ArrowDown c="#a0a0a0" /></VBtn>
            </VTrack>
          </VScroll>
        </SheetArea>
        <TabBar>
          <TabNav>
            <svg width="5" height="9" viewBox="0 0 5 9"><path d="M5 0v9L0 4.500z" fill="#c4c4c4" /></svg>
            <svg width="5" height="9" viewBox="0 0 5 9"><path d="M0 0v9l5-4.500z" fill="#c4c4c4" /></svg>
          </TabNav>
          <SheetTab $sep $pad={11.5}>成绩表</SheetTab>
          <SheetTab $sep $pad={11.5}>员工信息</SheetTab>
          <SheetTab $sep $pad={11.5}>田字格</SheetTab>
          <SheetTab $sep $pad={1} />
          <ColorTab $bg="#bdd7ee" $pad={10}>XXX公司销售额</ColorTab>
          <SheetTab $sep $pad={1} $ml={2} />
          <ColorTab $bg="#f4b183" $pad={9.5}>课程表</ColorTab>
          <ActiveTab>Sheet5</ActiveTab>
          <AddSheet>+</AddSheet>
          <HBarDots />
          <HBar>
            <svg width="5" height="9" viewBox="0 0 5 9"><path d="M5 0v9L0 4.500z" fill="#666" /></svg>
          </HBar>
        </TabBar>
        <Status>
          <StatusItem $ml={8.5}>就绪</StatusItem>
          <StatusItem $ml={19}>数字</StatusItem>
          <StatusItem $ml={17}>
            <svg width="13" height="14" viewBox="0 0 13 14">
              <circle cx="3" cy="3" r="2.500" fill="#666" />
              <path d="M6 2h7M1 7h12M1 10h12M1 13h12" stroke="#666" strokeDasharray="2 1" />
            </svg>
          </StatusItem>
          <Stats>
            <span>平均值: 4月21日</span>
            <span>计数: 30</span>
            <span>数值计数: 30</span>
            <span>最小值: 4月1日</span>
            <span>最大值: 5月11日</span>
            <span>求和: 3月22日</span>
          </Stats>
          <StatusRight>
            <ViewBtn $w={36} $on>
              <svg width="14" height="12" viewBox="0 0 14 12"><path d="M.5.500h13v11H.5zM.5 4h13M.5 8h13M5 .5v11M9 .5v11" fill="none" stroke="#666" /></svg>
            </ViewBtn>
            <ViewBtn $w={39}>
              <svg width="14" height="12" viewBox="0 0 14 12"><path d="M.5.500h13v11H.5zM3.500 3h7v6h-7z" fill="none" stroke="#666" /></svg>
            </ViewBtn>
            <ViewBtn $w={36}>
              <svg width="13" height="12" viewBox="0 0 13 12"><path d="M.5 11V.5h12V11M4.500.5V11M8.500.5V11" fill="none" stroke="#666" /></svg>
            </ViewBtn>
            <ViewBtn $w={10}>-</ViewBtn>
            <ZoomTrack><ZoomThumb /></ZoomTrack>
            <ViewBtn $w={10}>+</ViewBtn>
            <ViewBtn $w={34}>60%</ViewBtn>
          </StatusRight>
        </Status>

        <Arrow width="120" height="30" viewBox="0 0 120 30">
          <path d="M5 19 30 10.500 29 16 116 6 116.500 9.500 30 20 31 24z" fill="#f01010" />
        </Arrow>
        <CrossCursor width="16" height="16" viewBox="0 0 16 16">
          <path d="M5.500 1h5v4.500H15v5h-4.500V15h-5v-4.500H1v-5h4.500z" fill="#fff" stroke="#000" strokeWidth="1.500" />
        </CrossCursor>
        <Watermark>
          <WmText>
            <WmRed>电脑技术网</WmRed>
            <WmBlur />
            <WmUrl>www.tagxp.com</WmUrl>
          </WmText>
          <WmTile>
            TAG
            <WmSwirl width="42" height="36" viewBox="0 0 42 36">
              <path d="M40 3Q12 0 4 16q-5 14 14 17 12 1 18-8-10 5-20 2-9-4-4-12Q20 5 40 3z" fill="rgba(40,105,220,.55)" />
            </WmSwirl>
            <WmFaint $top={64} $fs={19}>极光下载站</WmFaint>
            <WmFaint $top={90} $fs={15}>www.xz7.com</WmFaint>
          </WmTile>
        </Watermark>
      </Page>
    </>
  );
}
